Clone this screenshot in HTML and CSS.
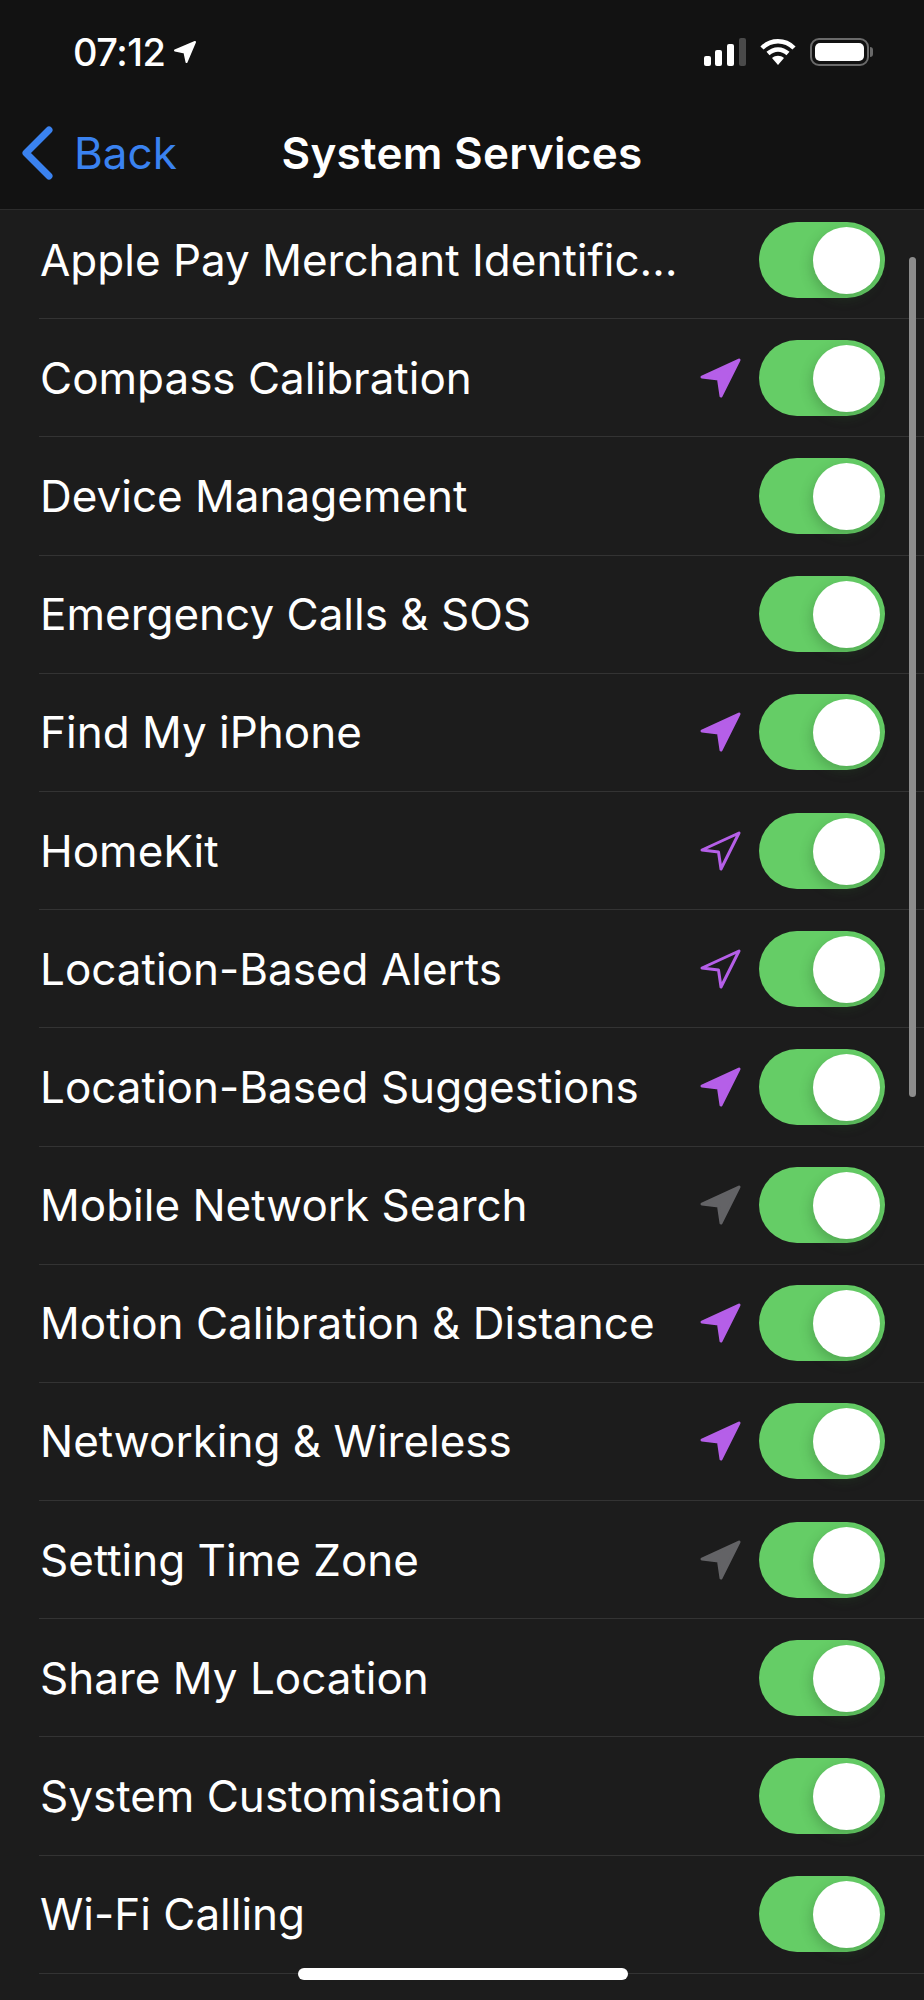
FILE: index.html
```html
<!doctype html>
<html>
<head>
<meta name="viewport" content="width=device-width, initial-scale=1.0">
<title>System Services</title>
<link rel="stylesheet" href="styles.css">
</head>
<body>
<svg class="defs" width="0" height="0">
    <symbol id="arrow" viewBox="0 0 44 44">
        <path d="M3 21 L40 4 L22 40 L19.5 23 Z"/>
    </symbol>
</svg>

<div id="phone">
    <div id="header">
        <div id="status">
            <div id="clock">
                <span>07:12</span>
                <svg width="24" height="24" viewBox="0 0 24 24"><path class="white thick" d="M2 10.5 L22 2 L13.5 22 L11.5 12.5 Z"/></svg>
            </div>
            <div id="indicators">
                <svg width="42" height="28" viewBox="0 0 42 28">
                    <rect class="white" x="0" y="18" width="7" height="10" rx="2"/>
                    <rect class="white" x="11" y="12" width="7" height="16" rx="2"/>
                    <rect class="white" x="23" y="6" width="7" height="22" rx="2"/>
                    <rect class="dim" x="35" y="0" width="7" height="28" rx="2"/>
                </svg>
                <svg width="36" height="28" viewBox="0 0 36 28">
                    <path class="wave" d="M2 10 C11 1 25 1 34 10"/>
                    <path class="wave" d="M8 15.5 C14 10 22 10 28 15.5"/>
                    <path class="white" d="M12 20 C15.5 17 20.5 17 24 20 L18 27 Z"/>
                </svg>
                <div id="battery"><div id="charge"></div></div>
            </div>
        </div>
        <div id="nav">
            <div id="back">
                <svg width="32" height="54" viewBox="0 0 32 54"><path d="M28 4 L5 27 L28 50"/></svg>
                <span>Back</span>
            </div>
            <div id="title">System Services</div>
        </div>
    </div>

    <div id="list">
        <div id="rows">
            <div class="row"><span class="label">Apple Pay Merchant Identific…</span><span class="toggle"></span></div>
            <div class="row"><span class="label">Compass Calibration</span><svg class="loc solid"><use href="#arrow"/></svg><span class="toggle"></span></div>
            <div class="row"><span class="label">Device Management</span><span class="toggle"></span></div>
            <div class="row"><span class="label">Emergency Calls &amp; SOS</span><span class="toggle"></span></div>
            <div class="row"><span class="label">Find My iPhone</span><svg class="loc solid"><use href="#arrow"/></svg><span class="toggle"></span></div>
            <div class="row"><span class="label">HomeKit</span><svg class="loc hollow"><use href="#arrow"/></svg><span class="toggle"></span></div>
            <div class="row"><span class="label">Location-Based Alerts</span><svg class="loc hollow"><use href="#arrow"/></svg><span class="toggle"></span></div>
            <div class="row"><span class="label">Location-Based Suggestions</span><svg class="loc solid"><use href="#arrow"/></svg><span class="toggle"></span></div>
            <div class="row"><span class="label">Mobile Network Search</span><svg class="loc grey"><use href="#arrow"/></svg><span class="toggle"></span></div>
            <div class="row"><span class="label">Motion Calibration &amp; Distance</span><svg class="loc solid"><use href="#arrow"/></svg><span class="toggle"></span></div>
            <div class="row"><span class="label">Networking &amp; Wireless</span><svg class="loc solid"><use href="#arrow"/></svg><span class="toggle"></span></div>
            <div class="row"><span class="label">Setting Time Zone</span><svg class="loc grey"><use href="#arrow"/></svg><span class="toggle"></span></div>
            <div class="row"><span class="label">Share My Location</span><span class="toggle"></span></div>
            <div class="row"><span class="label">System Customisation</span><span class="toggle"></span></div>
            <div class="row"><span class="label">Wi-Fi Calling</span><span class="toggle"></span></div>
        </div>
        <div id="scrollbar"></div>
    </div>
    <div id="home"></div>
</div>
</body>
</html>
```

FILE: styles.css
```css
html, body {
    margin: 0;
    background-color: #1c1c1c;
}
body {
    font-family: "Inter", "Liberation Sans", sans-serif;
    color: #ffffff;
}
.defs {
    display: block;
    height: 0;
}
.white {
    fill: #ffffff;
}
.thick {
    stroke: #ffffff;
    stroke-width: 2;
    stroke-linejoin: round;
}
.dim {
    fill: #4a4a4a;
}
.wave {
    fill: none;
    stroke: #ffffff;
    stroke-width: 4.5;
}

#phone {
    position: relative;
    width: 924px;
    height: 2000px;
    overflow: hidden;
}

#header {
    position: relative;
    z-index: 1;
    height: 209px;
    background-color: #121212;
    border-bottom: 1px solid #2c2c2c;
}
#status {
    display: flex;
    justify-content: space-between;
    padding: 30px 51px 0 73px;
    height: 44px;
}
#clock {
    display: flex;
    align-items: center;
    gap: 8px;
    font-size: 38px;
    font-weight: 500;
    letter-spacing: -0.5px;
}
#indicators {
    display: flex;
    align-items: center;
    gap: 14px;
    padding-top: 7px;
    padding-right: 4px;
    height: 30px;
}
#battery {
    position: relative;
    box-sizing: border-box;
    width: 59px;
    height: 28px;
    padding: 3px;
    border: 2px solid #6a6a6a;
    border-radius: 9px;
}
#battery::after {
    content: "";
    position: absolute;
    right: -6px;
    top: 7px;
    width: 3px;
    height: 10px;
    background-color: #6a6a6a;
    border-radius: 0 3px 3px 0;
}
#charge {
    height: 100%;
    background-color: #ffffff;
    border-radius: 5px;
}

#nav {
    display: grid;
    grid-template-columns: 1fr auto 1fr;
    align-items: center;
    margin-top: 52px;
    padding-left: 21px;
    padding-right: 21px;
}
#back {
    display: flex;
    align-items: center;
    gap: 21px;
    font-size: 44px;
    color: #3a82f0;
    grid-column: 1;
}
#back svg {
    fill: none;
    stroke: #3a82f0;
    stroke-width: 7;
    stroke-linecap: round;
    stroke-linejoin: round;
}
#title {
    font-size: 44px;
    font-weight: 600;
    letter-spacing: 0.3px;
    grid-column: 2;
}

#list {
    position: relative;
    height: 1790px;
    overflow: hidden;
}
#rows {
    margin-top: -9px;
}
.row {
    box-sizing: border-box;
    display: flex;
    align-items: center;
    height: 118.2px;
    margin-left: 39px;
    padding: 0 39px 0 1px;
    border-bottom: 1.5px solid #333333;
}
.label {
    flex: 1;
    font-size: 44px;
    font-weight: 400;
    white-space: nowrap;
}
.loc {
    width: 44px;
    height: 44px;
    margin-right: 16px;
}
.solid {
    fill: #b55fe8;
    stroke: #b55fe8;
    stroke-width: 3;
    stroke-linejoin: round;
}
.hollow {
    fill: none;
    stroke: #b55fe8;
    stroke-width: 3;
    stroke-linejoin: round;
}
.grey {
    fill: #636366;
    stroke: #636366;
    stroke-width: 3;
    stroke-linejoin: round;
}

.toggle {
    position: relative;
    width: 126px;
    height: 76px;
    background-color: #65cd66;
    border-radius: 38px;
}
.toggle::after {
    content: "";
    position: absolute;
    top: 5px;
    right: 5px;
    width: 67px;
    height: 67px;
    background-color: #ffffff;
    border-radius: 50%;
    box-shadow: -2px 5px 12px rgba(40, 90, 40, 0.3);
}

#scrollbar {
    position: absolute;
    top: 47px;
    right: 8px;
    width: 7px;
    height: 840px;
    background-color: #8c8c8c;
    border-radius: 4px;
}
#home {
    position: absolute;
    left: 298px;
    top: 1968px;
    width: 330px;
    height: 12px;
    background-color: #ffffff;
    border-radius: 6px;
}
```
